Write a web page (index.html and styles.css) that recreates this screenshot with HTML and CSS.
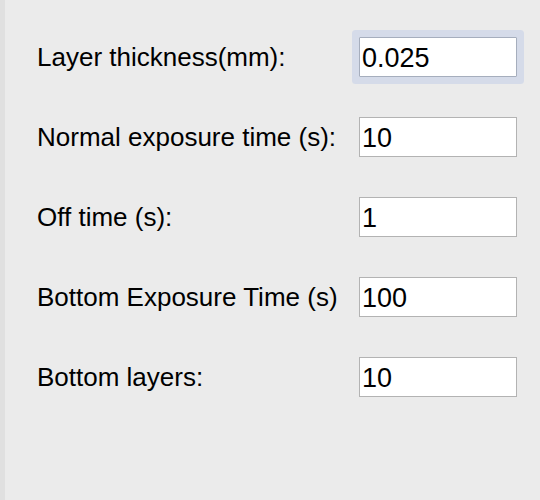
FILE: index.html
```html
<!DOCTYPE html>
<html lang="en">
<head>
    <meta charset="UTF-8">
    <title>Print Settings</title>
    <link rel="stylesheet" href="styles.css">
</head>
<body>
    <div class="edge"></div>
    <form class="settings">
        <div class="row">
            <label for="layerThickness">Layer thickness(mm):</label>
            <input type="text" id="layerThickness" class="focused" value="0.025">
        </div>
        <div class="row">
            <label for="exposure">Normal exposure time (s):</label>
            <input type="text" id="exposure" value="10">
        </div>
        <div class="row">
            <label for="offTime">Off time (s):</label>
            <input type="text" id="offTime" value="1">
        </div>
        <div class="row">
            <label for="bottomExposure">Bottom Exposure Time (s)</label>
            <input type="text" id="bottomExposure" value="100">
        </div>
        <div class="row">
            <label for="bottomLayers">Bottom layers:</label>
            <input type="text" id="bottomLayers" value="10">
        </div>
    </form>
</body>
</html>
```

FILE: styles.css
```css
html, body {
    height: 100%;
}
body {
    margin: 0;
    background-color: #ebebeb;
    font-family: "Liberation Sans", Arial, sans-serif;
    color: #000;
    display: flex;
}
.edge {
    width: 5px;
    background-color: #e0e0e0;
}
.settings {
    padding: 37px 0 0 32px;
    display: flex;
    flex-direction: column;
    gap: 40px;
}
.row {
    display: flex;
    align-items: center;
    height: 40px;
}
.row label {
    width: 322px;
    font-size: 26px;
    white-space: nowrap;
}
.row input {
    box-sizing: border-box;
    width: 158px;
    height: 40px;
    margin: 0;
    padding: 2px 2px 0;
    border: 1px solid #b3b3b3;
    background: #fff;
    font-family: "Liberation Sans", Arial, sans-serif;
    font-size: 27px;
    color: #000;
    outline: none;
}
.row input.focused {
    border-color: #a6aebd;
    box-shadow: 0 0 0 7px #d5dbe9;
    border-radius: 1px;
}
```
